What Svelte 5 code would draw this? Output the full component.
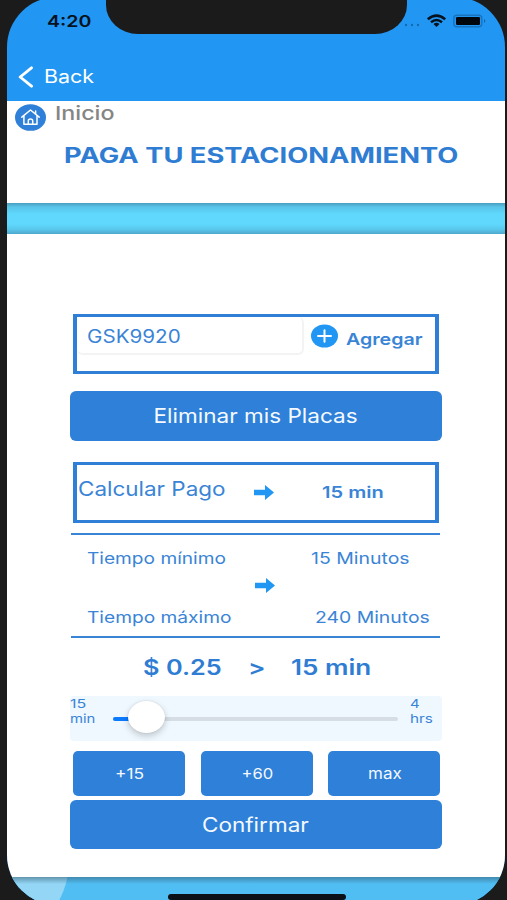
<script>
    let plate = "GSK9920";
    let minutes = 15;
    let price = "0.25";

    const steps = [
        { text: "+15", width: 29 },
        { text: "+60", width: 32 },
        { text: "max", width: 34 }
    ];

    const limits = [
        { name: "Tiempo mínimo", nameWidth: 139, value: "15 Minutos", valueWidth: 99 },
        { name: "Tiempo máximo", nameWidth: 144, value: "240 Minutos", valueWidth: 115 }
    ];

    // Stretches a label horizontally so that it fills the given width
    const fit = (node, width) => {
        node.style.transform = `scaleX(${width / node.offsetWidth})`;
    }
</script>

<div class="device">
    <div class="screen">
        <header>
            <div class="status">
                <span class="time"><span class="label" use:fit={44}>4:20</span></span>
                <div class="notch"></div>
                <svg class="signal" width="82" height="16" viewBox="0 0 82 16">
                    <g fill="#1769ad">
                        <circle cx="0" cy="12" r="1.2" />
                        <circle cx="6" cy="12" r="1.2" />
                        <circle cx="12" cy="12" r="1.2" />
                    </g>
                    <g fill="none" stroke="#06121e" stroke-width="2.5">
                        <path d="M21.8 6.2Q30.5-1 39.2 6.2" />
                        <path d="M25 9.3Q30.5 4.6 36 9.3" />
                    </g>
                    <path d="M27.5 11Q30.5 8.6 33.5 11L30.5 14Z" fill="#06121e" />
                    <rect x="47.8" y="2.3" width="28" height="11.4" rx="3" fill="none" stroke="#1874bf" stroke-width="1.4" />
                    <rect x="50" y="4" width="24" height="8" rx="1.3" fill="#00060c" />
                    <path d="M78 6Q80.6 8 78 10Z" fill="#1565a8" />
                </svg>
            </div>
            <div class="back">
                <svg width="16" height="22" viewBox="0 0 16 22">
                    <path d="M13.5 1.8L2.2 11L13.5 20.2" fill="none" stroke="#fff" stroke-width="2.9" stroke-linecap="round" stroke-linejoin="round" />
                </svg>
                <span class="label" use:fit={50}>Back</span>
            </div>
        </header>

        <section class="top">
            <div class="home">
                <svg width="31" height="27" viewBox="0 0 31 27">
                    <ellipse cx="15.5" cy="13.5" rx="15.5" ry="13.3" fill="#2f80d8" />
                    <g fill="none" stroke="#fff" stroke-width="1.5" stroke-linejoin="round" stroke-linecap="round">
                        <path d="M6.8 13.2L15.5 6L24.2 13.2" />
                        <path d="M8.9 12V20.2H22V12" />
                        <path d="M20.6 9.6V7" />
                        <path d="M13.3 20V16.8Q13.3 15 15.5 15Q17.7 15 17.7 16.8V20" />
                    </g>
                </svg>
                <span class="label" use:fit={60}>Inicio</span>
            </div>
            <h1><span class="label" use:fit={394}>PAGA TU ESTACIONAMIENTO</span></h1>
        </section>

        <div class="band"></div>

        <main>
            <div class="box plate-box">
                <div class="input"><span class="label" use:fit={94}>{plate}</span></div>
                <svg width="27" height="24" viewBox="0 0 27 24">
                    <ellipse cx="13.5" cy="12" rx="13.5" ry="11.5" fill="#2196f3" />
                    <path d="M7 12H20M13.5 6.3V17.7" stroke="#fff" stroke-width="2" stroke-linecap="round" />
                </svg>
                <span class="label strong" use:fit={76}>Agregar</span>
            </div>

            <button class="big"><span class="label center" use:fit={204}>Eliminar mis Placas</span></button>

            <div class="box pay-box">
                <span class="label pay" use:fit={147}>Calcular Pago</span>
                <svg class="arrow" width="20" height="15" viewBox="0 0 20 15">
                    <path d="M0 4.7H11V0L20 7.5L11 15V10.3H0Z" fill="#2196f3" />
                </svg>
                <span class="label strong" use:fit={62}>{minutes} min</span>
            </div>

            <div class="limits">
                <div class="names">
                    {#each limits as limit}
                        <span class="label" use:fit={limit.nameWidth}>{limit.name}</span>
                    {/each}
                </div>
                <svg class="arrow" width="20" height="15" viewBox="0 0 20 15">
                    <path d="M0 4.7H11V0L20 7.5L11 15V10.3H0Z" fill="#2196f3" />
                </svg>
                <div class="values">
                    {#each limits as limit}
                        <span class="label" use:fit={limit.valueWidth}>{limit.value}</span>
                    {/each}
                </div>
            </div>

            <div class="price">
                <span class="cost"><span class="label" use:fit={79}>$ {price}</span></span>
                <span class="than"><span class="label" use:fit={17}>&gt;</span></span>
                <span class="label" use:fit={80}>{minutes} min</span>
            </div>

            <div class="slider">
                <div class="end">
                    <span class="label" use:fit={16}>15</span>
                    <span class="label" use:fit={26}>min</span>
                </div>
                <div class="track">
                    <div class="fill"></div>
                    <div class="thumb"></div>
                </div>
                <div class="end">
                    <span class="label" use:fit={10}>4</span>
                    <span class="label" use:fit={23}>hrs</span>
                </div>
            </div>

            <div class="steps">
                {#each steps as step}
                    <button><span class="label center" use:fit={step.width}>{step.text}</span></button>
                {/each}
            </div>
            <button class="big confirm"><span class="label center" use:fit={107}>Confirmar</span></button>
        </main>

        <footer>
            <div class="bubble"></div>
            <div class="indicator"></div>
        </footer>
    </div>
</div>

<style>
    :global(body) {
        background: #1b1b1b;
    }

    .device {
        height: 900px;
        overflow: hidden;
        background: #1b1b1b;
        font-family: Inter, "Liberation Sans", sans-serif;
        color: #3a84d6;
        display: flex;
    }

    .screen {
        flex: none;
        box-sizing: border-box;
        width: 498.4px;
        height: 908px;
        margin: -3px 0 0 7px;
        padding-top: 3px;
        border-radius: 50px;
        overflow: hidden;
        background: #2196f3;
        display: flex;
        flex-direction: column;
    }

    .label {
        display: inline-block;
        white-space: nowrap;
        transform-origin: left center;
    }

    .label.center {
        transform-origin: center;
    }

    .strong {
        font-size: 16.5px;
        font-weight: 600;
    }

    header {
        flex: none;
        height: 100.5px;
    }

    .status {
        display: flex;
        height: 42px;
    }

    .time {
        width: 58.5px;
        padding-left: 40px;
        font-size: 16px;
        font-weight: 600;
        line-height: 42px;
        color: #06121e;
    }

    .notch {
        width: 301px;
        height: 34px;
        border-radius: 0 0 32px 32px / 0 0 29px 29px;
        background: #1b1b1b;
    }

    .signal {
        margin: 13px 0 0 -0.5px;
        overflow: visible;
    }

    .back {
        display: flex;
        align-items: center;
        gap: 10px;
        height: 22px;
        margin: 24px 0 0 11px;
        font-size: 18px;
        line-height: 22px;
        color: #fff;
    }

    .top {
        flex: none;
        height: 102.7px;
        background: #fff;
    }

    .home {
        display: flex;
        gap: 9px;
        height: 31px;
        padding-left: 8px;
        font-size: 19px;
        font-weight: 500;
        line-height: 26px;
        color: #858585;
    }

    .home svg {
        margin-top: 3.5px;
    }

    h1 {
        margin: 9px 0 0 57px;
        font-size: 21px;
        font-weight: 700;
        line-height: 30px;
        color: #2f7dd3;
    }

    .band {
        flex: none;
        height: 30.8px;
        background: linear-gradient(#4a9fc0, #58c4e8 4px, #60d8fd 11px, #60d8fd 21px, #5ac9ee 26px, #4fa9cb);
    }

    main {
        flex: none;
        box-sizing: border-box;
        height: 643px;
        padding: 79.8px 63.8px 0 62.6px;
        background: #fff;
        display: flex;
        flex-direction: column;
    }

    .box {
        flex: none;
        box-sizing: border-box;
        width: 366px;
        height: 60.5px;
        margin-left: 3.6px;
        border: solid #2f7fd6;
        border-width: 3px 4px;
        display: flex;
        align-items: flex-start;
    }

    .input {
        box-sizing: border-box;
        width: 227px;
        height: 38.5px;
        padding-left: 9.7px;
        border: solid #f3f3f3;
        border-width: 0 2px 2px 0;
        border-radius: 6px;
        font-size: 18px;
        line-height: 39px;
    }

    .plate-box svg {
        margin: 7.2px 8px 0 7px;
    }

    .plate-box .strong {
        line-height: 44px;
    }

    button {
        padding: 0;
        border: 0;
        border-radius: 5px;
        background: #2f80d8;
        color: #f4f9ff;
        font-family: inherit;
    }

    .big {
        flex: none;
        width: 372px;
        height: 49.5px;
        margin: 17px 0 21.5px;
        border-radius: 6px;
        font-size: 20px;
    }

    .pay-box {
        display: grid;
        grid-template-columns: 176px 68px auto;
        justify-items: start;
        padding-left: 1px;
    }

    .pay {
        font-size: 20px;
        line-height: 49px;
    }

    .pay-box .arrow {
        margin-top: 20px;
    }

    .pay-box .strong {
        line-height: 55px;
    }

    .limits {
        flex: none;
        box-sizing: border-box;
        display: flex;
        align-items: center;
        width: 369px;
        height: 104.7px;
        margin: 10.5px 0 0 1.4px;
        border: solid #3a84d6;
        border-width: 2.5px 0;
        font-size: 16.5px;
        line-height: 24px;
    }

    .names, .values {
        flex: none;
        display: flex;
        flex-direction: column;
        align-items: flex-start;
        gap: 34.5px;
        padding-top: 4px;
    }

    .names {
        width: 168px;
        padding-left: 16px;
    }

    .values {
        padding-left: 36px;
    }

    .values .label:last-child {
        margin-left: 4.5px;
    }

    .arrow {
        flex: none;
    }

    .price {
        flex: none;
        display: flex;
        height: 30px;
        margin-top: 14px;
        padding-left: 73px;
        font-size: 21.5px;
        font-weight: 600;
        line-height: 30px;
        color: #2f7dd3;
    }

    .cost {
        width: 105px;
    }

    .than {
        width: 43px;
    }

    .slider {
        flex: none;
        display: flex;
        height: 45px;
        margin-top: 14.5px;
        border-radius: 4px;
        background: #eff8ff;
    }

    .end {
        flex: none;
        display: flex;
        flex-direction: column;
        align-items: flex-start;
        width: 43.5px;
        padding-top: 1px;
        font-size: 12px;
        line-height: 14.5px;
    }

    .end:last-child {
        width: 32px;
    }

    .track {
        position: relative;
        flex: none;
        width: 284.5px;
        height: 4px;
        margin: 20.5px 12px 0 0;
        border-radius: 2px;
        background: #d7dde4;
    }

    .fill {
        width: 20px;
        height: 4px;
        border-radius: 2px;
        background: #0a7aff;
    }

    .thumb {
        position: absolute;
        top: -16px;
        left: 14.5px;
        width: 37px;
        height: 32px;
        border-radius: 50%;
        background: #fff;
        box-shadow: 0 3px 7px rgba(0, 0, 0, 0.2), 0 0 2px rgba(0, 0, 0, 0.12);
    }

    .steps {
        flex: none;
        display: grid;
        grid-template-columns: repeat(3, 112px);
        gap: 15.5px;
        height: 45px;
        margin: 10px 0 0 3.8px;
    }

    .steps button {
        font-size: 15px;
    }

    .confirm {
        margin: 3.5px 0 0;
    }

    footer {
        position: relative;
        flex: 1;
        overflow: hidden;
        background: #50bef3;
    }

    footer::after {
        content: "";
        position: absolute;
        inset: 0 0 auto;
        height: 7px;
        background: linear-gradient(rgba(50, 85, 105, 0.5), rgba(50, 85, 105, 0));
    }

    .bubble {
        position: absolute;
        left: -90px;
        top: -96px;
        width: 152px;
        height: 160px;
        border-radius: 50%;
        background: #93d6f5;
    }

    .indicator {
        position: absolute;
        left: 160.5px;
        top: 17.5px;
        width: 178px;
        height: 6px;
        border-radius: 3px;
        background: #0b1116;
    }
</style>
